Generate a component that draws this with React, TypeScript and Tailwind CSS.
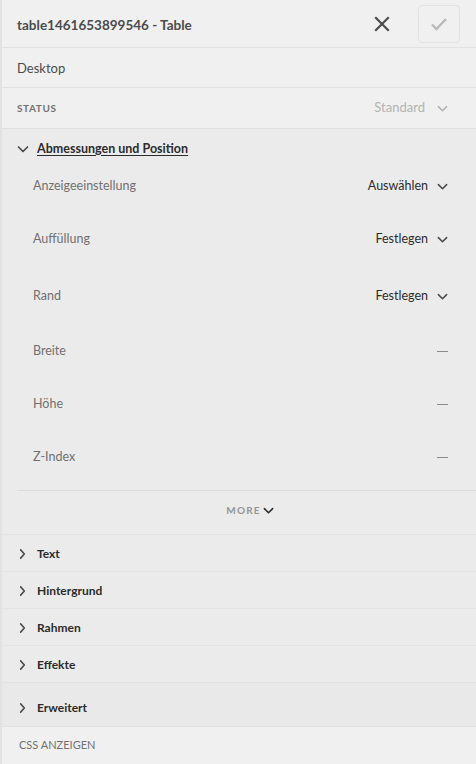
import React from 'react';

const font = { fontFamily: 'Lato, "Open Sans", "Liberation Sans", sans-serif' };

const Chevron = ({ dir = 'down', className = '' }: { dir?: 'down' | 'right'; className?: string }) => (
  <svg viewBox="0 0 12 12" className={className} fill="none" stroke="currentColor" strokeWidth="1.7" strokeLinecap="round" strokeLinejoin="round">
    {dir === 'down' ? <path d="M1.5 4l4.5 4.5L10.5 4" /> : <path d="M4 1.5l4 4.5-4 4.5" />}
  </svg>
);

const rows = [
  { label: 'Anzeigeeinstellung', value: 'Auswählen', mt: 'mt-0' },
  { label: 'Auffüllung', value: 'Festlegen', mt: 'mt-[17px]' },
  { label: 'Rand', value: 'Festlegen', mt: 'mt-[21px]' },
  { label: 'Breite', value: '', mt: 'mt-[19px]' },
  { label: 'Höhe', value: '', mt: 'mt-[17px]' },
  { label: 'Z-Index', value: '', mt: 'mt-[17px]' },
];

const collapsed = ['Text', 'Hintergrund', 'Rahmen', 'Effekte'];

export default function App() {
  return (
    <div className="w-[476px] h-[764px] bg-[#f0f0f0] border-l-2 border-[#e2e2e2] flex flex-col overflow-hidden" style={font}>
      {/* header */}
      <div className="h-[48px] flex items-center pl-[15px] pr-[16px] pt-[3px] border-b border-[#e2e2e2] shrink-0">
        <span className="text-[13.5px] font-bold text-[#4b4b4b]">table1461653899546 - Table</span>
        <div className="ml-auto flex items-center -mt-[3px]">
          <svg viewBox="0 0 16 16" className="w-[16px] h-[16px] text-[#4b4b4b] mr-[28px]" stroke="currentColor" strokeWidth="2.2" strokeLinecap="square">
            <path d="M2 2l12 12M14 2L2 14" />
          </svg>
          <div className="w-[42px] h-[38px] border border-[#e2e2e2] rounded-[4px] flex items-center justify-center">
            <svg viewBox="0 0 18 18" className="w-[18px] h-[18px] text-[#b9b9b9]" fill="none" stroke="currentColor" strokeWidth="2.4" strokeLinejoin="miter">
              <path d="M2 9.5l4.5 4.5L16 4" />
            </svg>
          </div>
        </div>
      </div>
      {/* desktop */}
      <div className="h-[40px] flex items-center pl-[15px] pt-[3px] border-b border-[#e2e2e2] shrink-0">
        <span className="text-[13px] text-[#4b4b4b]">Desktop</span>
      </div>
      {/* status */}
      <div className="h-[41px] flex items-center pl-[15px] pr-[28px] border-b border-[#e0e0e0] shrink-0">
        <span className="text-[10px] font-bold tracking-[0.6px] text-[#707070]">STATUS</span>
        <span className="ml-auto text-[13px] text-[#b3b3b3]">Standard</span>
        <Chevron className="w-[11px] h-[11px] ml-[12px] text-[#b3b3b3]" />
      </div>
      {/* sections */}
      <div className="bg-[#ebebeb] flex flex-col shrink-0">
        <div className="h-[38px] flex items-center pl-[15px] pt-[2px]">
          <Chevron className="w-[12px] h-[12px] text-[#4b4b4b]" />
          <span className="ml-[8px] text-[12.5px] font-bold text-[#2c2c2c] underline underline-offset-2">Abmessungen und Position</span>
        </div>
        <div className="flex flex-col pl-[31px] pr-[28px] pb-[16px]">
          {rows.map(r => (
            <div key={r.label} className={`h-[36px] flex items-center pt-[2px] ${r.mt}`}>
              <span className="text-[12.5px] text-[#707070]">{r.label}</span>
              {r.value ? (
                <>
                  <span className="ml-auto text-[12.5px] text-[#2c2c2c]">{r.value}</span>
                  <Chevron className="w-[11px] h-[11px] ml-[9px] text-[#4b4b4b]" />
                </>
              ) : (
                <span className="ml-auto w-[11px] h-px bg-[#8a8a8a]" />
              )}
            </div>
          ))}
        </div>
        <div className="ml-[15px] border-t border-[#dcdcdc]" />
        <div className="h-[43px] flex items-center justify-center pb-[4px] pl-[22px]">
          <span className="text-[10px] font-bold tracking-[1.2px] text-[#959595]">MORE</span>
          <Chevron className="w-[11px] h-[11px] ml-[2px] text-[#2c2c2c]" />
        </div>
        {collapsed.map(c => (
          <div key={c} className="h-[37px] flex items-center pl-[15px] pt-[2px] border-t border-[#e4e4e4]">
            <Chevron dir="right" className="w-[11px] h-[12px] text-[#4b4b4b]" />
            <span className="ml-[9px] text-[12px] font-bold text-[#2c2c2c]">{c}</span>
          </div>
        ))}
        <div className="h-[44px] flex items-center pl-[15px] pt-[7px] border-t border-[#e2e2e2] bg-[#e9e9e9]">
          <Chevron dir="right" className="w-[11px] h-[12px] text-[#4b4b4b]" />
          <span className="ml-[9px] text-[12px] font-bold text-[#2c2c2c]">Erweitert</span>
        </div>
      </div>
      <div className="flex-1 flex items-center pl-[17px] bg-[#f0f0f0] border-t border-[#e2e2e2]">
        <span className="text-[11px] text-[#707070]">CSS ANZEIGEN</span>
      </div>
    </div>
  );
}
